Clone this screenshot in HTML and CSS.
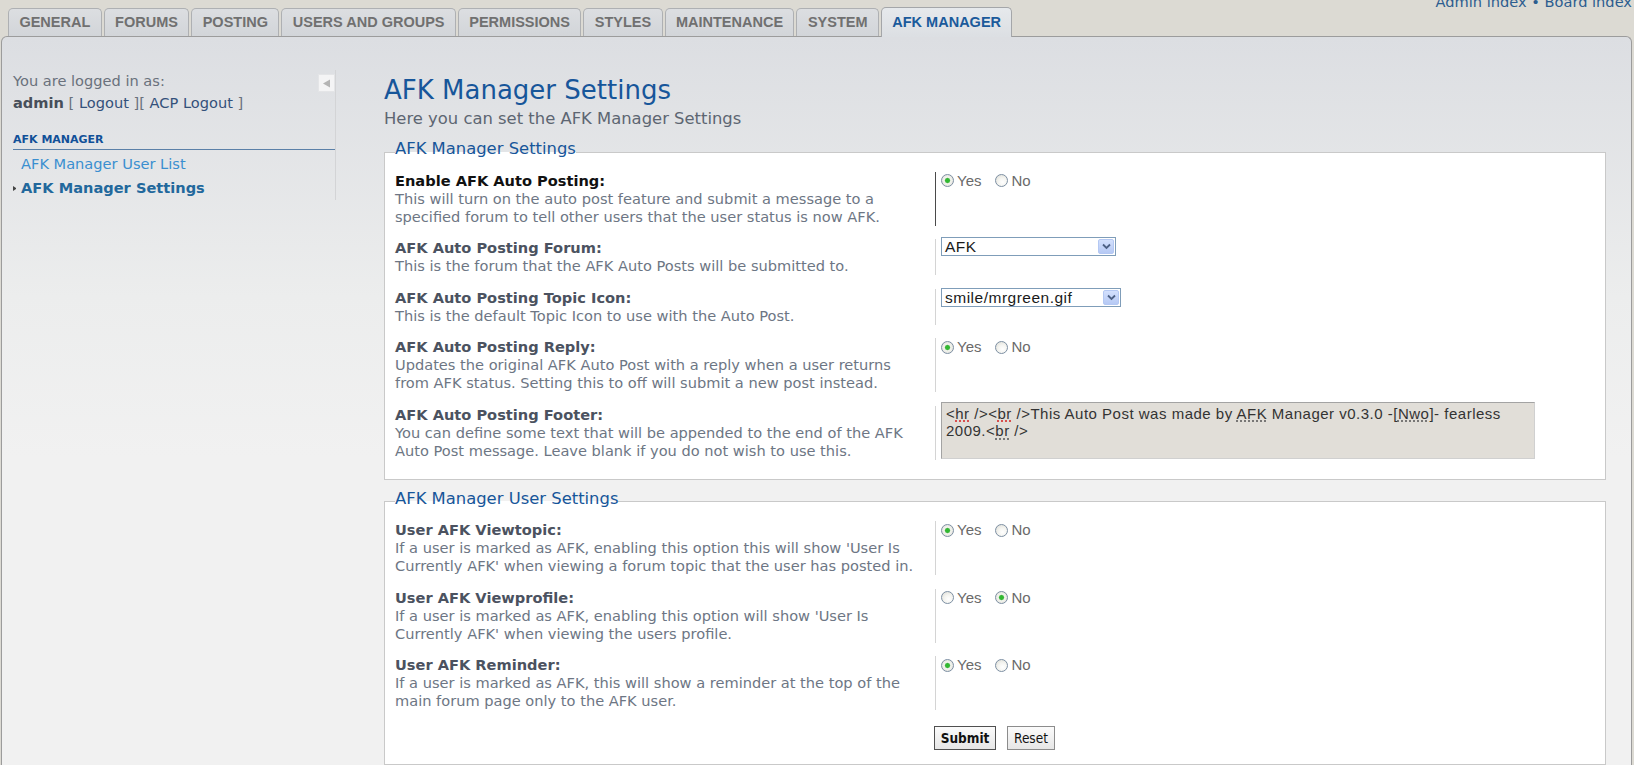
FILE: index.html
```html
<!DOCTYPE html>
<html>
<head>
<meta charset="utf-8">
<title>AFK Manager Settings</title>
<link rel="stylesheet" href="styles.css">
</head>
<body>
<div class="header">
  <ul class="tabs">
    <li class="tab">General</li>
    <li class="tab">Forums</li>
    <li class="tab">Posting</li>
    <li class="tab">Users and groups</li>
    <li class="tab">Permissions</li>
    <li class="tab">Styles</li>
    <li class="tab">Maintenance</li>
    <li class="tab">System</li>
    <li class="tab active">AFK Manager</li>
  </ul>
  <div class="toplinks"><a href="#">Admin index</a> &bull; <a href="#">Board index</a></div>
</div>

<div class="panel">
  <aside class="sidebar">
    <div class="userbox">
      <div class="loggedin">You are logged in as:<br><b class="uname">admin</b> [ <a href="#">Logout</a> ][ <a href="#">ACP Logout</a> ]</div>
      <span class="collapse"><svg width="9" height="9" viewBox="0 0 9 9"><path d="M8 0.5 L8 8.5 L1 4.5 Z" fill="#b4b4b4"/></svg></span>
    </div>
    <div class="menu">
      <div class="menu-head">AFK MANAGER</div>
      <a class="menu-item" href="#">AFK Manager User List</a>
      <a class="menu-item active" href="#">AFK Manager Settings</a>
    </div>
  </aside>

  <main class="main">
    <h1>AFK Manager Settings</h1>
    <p class="intro">Here you can set the AFK Manager Settings</p>

    <fieldset>
      <legend>AFK Manager Settings</legend>
      <dl class="row focus">
        <dt><label>Enable AFK Auto Posting:</label><span class="desc">This will turn on the auto post feature and submit a message to a<br>specified forum to tell other users that the user status is now AFK.</span></dt>
        <dd><label class="radio"><input type="radio" name="r1" checked>Yes</label><label class="radio"><input type="radio" name="r1">No</label></dd>
      </dl>
      <dl class="row">
        <dt><label>AFK Auto Posting Forum:</label><span class="desc">This is the forum that the AFK Auto Posts will be submitted to.</span></dt>
        <dd><div class="select sel1"><span class="sel-text">AFK</span><span class="sel-btn"><svg width="9" height="7" viewBox="0 0 9 7"><path d="M1 1.5 L4.5 5 L8 1.5" fill="none" stroke="#4d6185" stroke-width="1.8"/></svg></span></div></dd>
      </dl>
      <dl class="row">
        <dt><label>AFK Auto Posting Topic Icon:</label><span class="desc">This is the default Topic Icon to use with the Auto Post.</span></dt>
        <dd><div class="select sel2"><span class="sel-text">smile/mrgreen.gif</span><span class="sel-btn"><svg width="9" height="7" viewBox="0 0 9 7"><path d="M1 1.5 L4.5 5 L8 1.5" fill="none" stroke="#4d6185" stroke-width="1.8"/></svg></span></div></dd>
      </dl>
      <dl class="row">
        <dt><label>AFK Auto Posting Reply:</label><span class="desc">Updates the original AFK Auto Post with a reply when a user returns<br>from AFK status. Setting this to off will submit a new post instead.</span></dt>
        <dd><label class="radio"><input type="radio" name="r2" checked>Yes</label><label class="radio"><input type="radio" name="r2">No</label></dd>
      </dl>
      <dl class="row">
        <dt><label>AFK Auto Posting Footer:</label><span class="desc">You can define some text that will be appended to the end of the AFK<br>Auto Post message. Leave blank if you do not wish to use this.</span></dt>
        <dd><div class="textarea">&lt;<span class="sp">hr</span> /&gt;&lt;<span class="sp">br</span> /&gt;This Auto Post was made by <span class="ab">AFK</span> Manager v0.3.0 -[<span class="ab">Nwo</span>]- fearless 2009.&lt;<span class="ab">br</span> /&gt;</div></dd>
      </dl>
    </fieldset>

    <fieldset class="fs2">
      <legend>AFK Manager User Settings</legend>
      <dl class="row">
        <dt><label>User AFK Viewtopic:</label><span class="desc">If a user is marked as AFK, enabling this option this will show 'User Is<br>Currently AFK' when viewing a forum topic that the user has posted in.</span></dt>
        <dd><label class="radio"><input type="radio" name="r3" checked>Yes</label><label class="radio"><input type="radio" name="r3">No</label></dd>
      </dl>
      <dl class="row">
        <dt><label>User AFK Viewprofile:</label><span class="desc">If a user is marked as AFK, enabling this option will show 'User Is<br>Currently AFK' when viewing the users profile.</span></dt>
        <dd><label class="radio"><input type="radio" name="r4">Yes</label><label class="radio"><input type="radio" name="r4" checked>No</label></dd>
      </dl>
      <dl class="row">
        <dt><label>User AFK Reminder:</label><span class="desc">If a user is marked as AFK, this will show a reminder at the top of the<br>main forum page only to the AFK user.</span></dt>
        <dd><label class="radio"><input type="radio" name="r5" checked>Yes</label><label class="radio"><input type="radio" name="r5">No</label></dd>
      </dl>
      <div class="submit-row"><button class="btn btn-main" type="button">Submit</button><button class="btn" type="button">Reset</button></div>
    </fieldset>
  </main>
</div>
</body>
</html>
```
FILE: styles.css
```css
* { box-sizing: border-box; }
html { overflow: hidden; }
html, body { margin: 0; padding: 0; }
body {
  background: #dcdad3;
  font-family: "DejaVu Sans", Verdana, sans-serif;
  font-size: 14.6px;
  color: #536482;
}
a { text-decoration: none; }

/* ---------- header / tabs ---------- */
.header {
  display: flex;
  align-items: flex-end;
  height: 36px;
  padding-left: 8px;
}
.tabs {
  display: flex;
  align-items: flex-end;
  gap: 2px;
  list-style: none;
  margin: 0;
  padding: 0;
}
.tab {
  height: 28px;
  padding: 0 10.4px;
  border: 1px solid #aeb0b3;
  border-bottom: 0;
  border-radius: 5px 5px 0 0;
  background: linear-gradient(#dcdee1, #d2d5d9);
  font: bold 14.5px/27px "Liberation Sans", Arial, sans-serif;
  color: #707070;
  text-transform: uppercase;
  white-space: nowrap;
}
.tab.active {
  height: 30px;
  margin-bottom: -1px;
  position: relative;
  z-index: 1;
  line-height: 29px;
  background: linear-gradient(#e6e9ec, #dcdfe3);
  border-color: #a4a6a9;
  color: #1b5a9b;
}
.toplinks {
  margin-left: auto;
  align-self: flex-start;
  margin-top: -7px;
  padding-right: 2px;
  line-height: 18px;
  color: #2c5d8f;
  white-space: nowrap;
}
.toplinks a { color: #2c5d8f; }

/* ---------- panel ---------- */
.panel {
  display: flex;
  align-items: flex-start;
  margin: 0 2px 0 1px;
  min-height: 729px;
  padding: 33px 25px 0 11px;
  border: 1px solid #9c9c9c;
  border-bottom: 0;
  border-radius: 6px 6px 0 0;
  background: linear-gradient(#dcdee2 0, #eceded 260px, #f1f1f1 420px, #f1f1f1 100%);
}

/* ---------- sidebar ---------- */
.sidebar {
  width: 323px;
  flex: none;
  border-right: 1px solid #d3d4d6;
}
.userbox {
  display: flex;
  justify-content: space-between;
  align-items: flex-start;
}
.loggedin {
  line-height: 22px;
  color: #6a717c;
}
.loggedin .uname { color: #474e59; }
.loggedin a { color: #33507a; }
.collapse {
  margin-top: 4px;
  width: 17px;
  height: 18px;
  display: flex;
  align-items: center;
  justify-content: center;
  background: #f4f4f5;
  border: 1px solid #e4e5e7;
}
.menu-head {
  margin-top: 18px;
  padding-bottom: 1px;
  font-size: 11px;
  font-weight: bold;
  line-height: 16px;
  color: #115098;
  border-bottom: 1px solid #5b80a8;
}
.menu-item {
  display: flex;
  align-items: center;
  line-height: 24px;
  color: #3a8fd0;
}
.menu-item:first-of-type { margin-top: 2px; }
.menu-item::before {
  content: "";
  display: inline-block;
  box-sizing: border-box;
  width: 8px;
  flex: none;
}
.menu-item.active {
  font-weight: bold;
  color: #22689c;
}
.menu-item.active::before {
  width: 3px;
  height: 5px;
  margin-right: 5px;
  border-left: 3px solid #444;
  border-top: 2.5px solid transparent;
  border-bottom: 2.5px solid transparent;
}

/* ---------- main ---------- */
.main {
  flex: 1;
  margin-left: 48px;
}
h1 {
  margin: 5px 0 0;
  font-size: 26px;
  line-height: 30px;
  font-weight: normal;
  color: #17569a;
}
.intro {
  margin: 4px 0 0;
  font-size: 16.4px;
  line-height: 20px;
  color: #5d6672;
}
fieldset {
  margin: 10px 0 0;
  padding: 0 0 12px 10px;
  border: 1px solid #c9c9c9;
  background: #fff;
  min-width: 0;
}
fieldset.fs2 { margin-top: 9px; padding-bottom: 14px; }
legend {
  padding: 0 0 6px;
  font-size: 16.4px;
  line-height: 20px;
  color: #17569a;
}

.row {
  display: flex;
  margin: 0;
  padding: 6.75px 0;
  line-height: 18px;
}
.row dt {
  width: 540px;
  flex: none;
}
.row dt label {
  display: block;
  font-weight: bold;
  color: #4b5260;
}
.row .desc {
  display: block;
  color: #6d7684;
}
.row dd {
  flex: 1;
  margin: 0;
  padding-left: 5px;
  border-left: 1px solid #d4d4d4;
}
.row.focus dt label { color: #111; }
.row.focus dd { border-left-color: #4a4a4a; }

/* radios */
.radio {
  display: inline-flex;
  align-items: center;
  height: 18px;
  margin-right: 14px;
  font: 15px/18px "Liberation Sans", Arial, sans-serif;
  color: #6a6a6a;
}
.radio input {
  appearance: none;
  -webkit-appearance: none;
  width: 13px;
  height: 13px;
  margin: 0 3px 0 0;
  border: 1px solid #7d8fa3;
  border-radius: 50%;
  background: radial-gradient(circle at 60% 65%, #ffffff 0, #f4f4f0 45%, #d9d9d2 100%);
}
.radio input:checked {
  background: radial-gradient(circle, #2bbd2b 0, #38b538 2px, #f4f4f0 3.2px, #ecece6 60%, #d9d9d2 100%);
}

/* selects */
.select {
  display: flex;
  align-items: center;
  height: 19px;
  border: 1px solid #7f9db9;
  background: #fff;
  font: 15.5px/17px "Liberation Sans", Arial, sans-serif;
  letter-spacing: 0.5px;
  color: #1a1a1a;
}
.sel1 { width: 175px; margin-top: -2px; }
.sel2 { width: 180px; margin-top: -1px; }
.sel-text {
  flex: 1;
  padding-left: 3px;
  white-space: nowrap;
}
.sel-btn {
  width: 16px;
  height: 15px;
  margin-right: 1px;
  display: flex;
  align-items: center;
  justify-content: center;
  border: 1px solid #b4c8f3;
  border-radius: 2px;
  background: linear-gradient(#d3e0fd, #b6c9f4);
}

/* textarea */
.textarea {
  width: 594px;
  height: 57px;
  margin-top: -4px;
  padding: 2px 4px;
  border: 1px solid #a3a3a3;
  border-right-color: #d0d0d0;
  border-bottom-color: #d0d0d0;
  background: #e1ded8;
  font: 15px/17.5px "Liberation Sans", Arial, sans-serif;
  letter-spacing: 0.5px;
  color: #333;
}
.sp {
  text-decoration: underline dotted #d42020;
  text-underline-offset: 2px;
}
.ab {
  text-decoration: underline dotted #555;
  text-underline-offset: 2px;
}

/* buttons */
.submit-row {
  display: flex;
  gap: 11px;
  margin-top: 9px;
  padding-left: 539px;
}
.btn {
  height: 24px;
  padding: 0;
  font: 13.5px/22px "DejaVu Sans Condensed", "DejaVu Sans", sans-serif;
  color: #111;
  background: linear-gradient(#fbfbfb, #e6e6e6);
  border: 1px solid #8c8c8c;
  width: 48px;
}
.btn-main {
  width: 62px;
  font-weight: bold;
  border-color: #505050;
}
```
